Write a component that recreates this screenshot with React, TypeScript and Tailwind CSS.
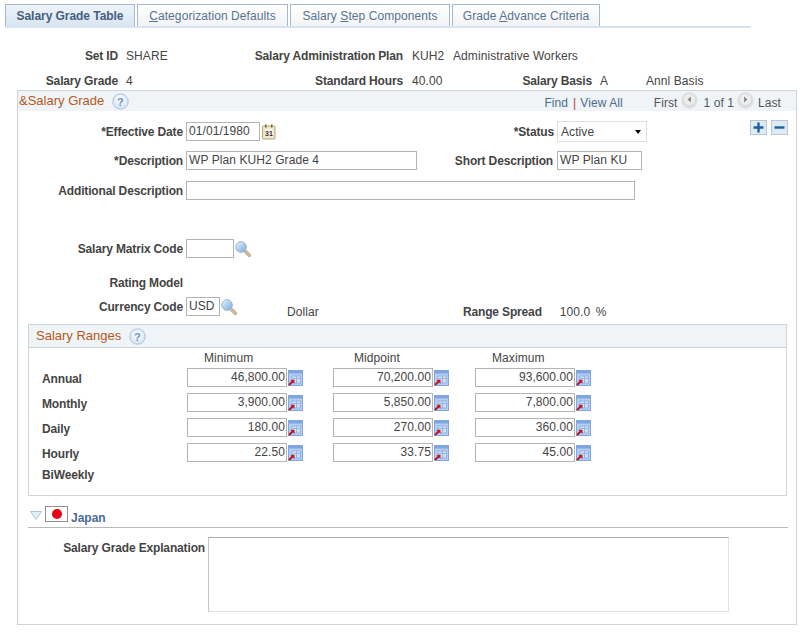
import React from "react";

const LABEL = "font-bold text-[#444] whitespace-nowrap tracking-[-0.15px]";

function Help() {
  return (
    <svg width="17" height="17" viewBox="0 0 17 17" className="shrink-0">
      <defs>
        <radialGradient id="hg" cx="50%" cy="40%" r="60%">
          <stop offset="0%" stopColor="#ffffff" />
          <stop offset="100%" stopColor="#d3e2f3" />
        </radialGradient>
      </defs>
      <circle cx="8.5" cy="8.5" r="7.7" fill="url(#hg)" stroke="#a9c2de" strokeWidth="1" />
      <text x="8.5" y="12.5" textAnchor="middle" fontSize="11" fontWeight="700" fontFamily="Liberation Sans" fill="#6f93bd">?</text>
    </svg>
  );
}

function Lookup({ id }: { id: string }) {
  return (
    <svg width="16" height="16" viewBox="0 0 16 16" className="shrink-0">
      <defs>
        <linearGradient id={id} x1="0" y1="0" x2="1" y2="1">
          <stop offset="0%" stopColor="#eef7fd" />
          <stop offset="100%" stopColor="#6fa8dc" />
        </linearGradient>
      </defs>
      <path d="M9.5 9.5 L14.4 14.4" stroke="#9aa7b5" strokeWidth="3.4" strokeLinecap="round" />
      <path d="M9.5 9.5 L14.4 14.4" stroke="#e2b483" strokeWidth="2.2" strokeLinecap="round" />
      <circle cx="6" cy="6" r="5.3" fill={`url(#${id})`} stroke="#93b6d6" strokeWidth="1" />
    </svg>
  );
}

function Calendar() {
  return (
    <svg width="14" height="16" viewBox="0 0 14 16" className="shrink-0">
      <rect x="0.5" y="2" width="12.5" height="13" rx="1" fill="#efe6c8" stroke="#b9a878" />
      <rect x="3" y="0.5" width="1.5" height="3" fill="#6b5f3c" />
      <rect x="9" y="0.5" width="1.5" height="3" fill="#6b5f3c" />
      <rect x="3" y="5" width="8" height="7.5" fill="#f8f4e4" />
      <text x="7" y="11.5" textAnchor="middle" fontSize="7" fontWeight="700" fontFamily="Liberation Sans" fill="#333">31</text>
    </svg>
  );
}

function Calc() {
  return (
    <svg width="15" height="16" viewBox="0 0 15 16" className="shrink-0">
      <rect x="0.5" y="0.5" width="14" height="15" fill="#b4cdf0" stroke="#7fa6e2" />
      <rect x="0.5" y="0.5" width="14" height="3" fill="#7fa6e2" />
      <rect x="4" y="6" width="8.5" height="7" fill="#cfe0f6" stroke="#93b4e4" />
      <path d="M5 8.5h7M8.5 6v7" stroke="#93b4e4" strokeWidth="1" />
      <path d="M1 15 L5 11" stroke="#c4121a" strokeWidth="2" />
      <path d="M2.5 9.8 H6.5 V13.8 Z" fill="#c4121a" />
    </svg>
  );
}

function Nav({ dir }: { dir: "l" | "r" }) {
  return (
    <svg width="17" height="17" viewBox="0 0 17 17" className="shrink-0">
      <circle cx="8.5" cy="8.5" r="8" fill="#dcdcdc" stroke="#e8e8e8" />
      <circle cx="8.5" cy="7.5" r="5.5" fill="#eeeeee" />
      <path d={dir === "l" ? "M10 4.5 V10.5 L6.5 7.5 Z" : "M7 4.5 V10.5 L10.5 7.5 Z"} fill="#8c8c8c" />
    </svg>
  );
}

function Box({ w, value, right }: { w: string; value?: string; right?: boolean }) {
  return (
    <div className={`${w} h-[19px] shrink-0 border border-[#b4b4b4] bg-white text-[#444] leading-[17px] overflow-hidden whitespace-nowrap ${right ? "text-right pr-[1px]" : "pl-[2px]"}`}>
      {value}
    </div>
  );
}

function Tab({ active, w, children }: { active?: boolean; w: string; children: React.ReactNode }) {
  return (
    <div className={`${w} h-[22px] flex items-center justify-center border border-b-0 border-[#a8b8cb] whitespace-nowrap ${active ? "bg-gradient-to-b from-[#eef3f9] to-[#d9e5f2] font-bold text-[#46607f] tracking-[-0.05px]" : "bg-gradient-to-b from-white to-[#f1f3f6] text-[#5a7290]"}`}>
      {children}
    </div>
  );
}

function RangeCell({ value }: { value: string }) {
  return (
    <div className="flex items-center gap-[1px]">
      <Box w="w-[100px]" value={value} right />
      <Calc />
    </div>
  );
}

const RANGES = [
  { label: "Annual", min: "46,800.00", mid: "70,200.00", max: "93,600.00" },
  { label: "Monthly", min: "3,900.00", mid: "5,850.00", max: "7,800.00" },
  { label: "Daily", min: "180.00", mid: "270.00", max: "360.00" },
  { label: "Hourly", min: "22.50", mid: "33.75", max: "45.00" },
];

const RANGE_COLS = "grid grid-cols-[158px_146px_142px_120px]";

export default function App() {
  return (
    <div className="w-[807px] h-[634px] bg-white overflow-hidden text-[12px] leading-[14px] text-[#444] tracking-[0.08px]" style={{ fontFamily: '"Liberation Sans", Arial, sans-serif' }}>
      {/* Tabs */}
      <div className="pt-[4px] pl-[5px]">
        <div className="w-[746px] border-b-2 border-[#d7e3f0] flex h-[24px]">
          <Tab active w="w-[130px] mr-[2px]">Salary Grade Table</Tab>
          <Tab w="w-[151px] mr-[2px]"><span><u>C</u>ategorization Defaults</span></Tab>
          <Tab w="w-[160px] mr-[2px]"><span>Salary <u>S</u>tep Components</span></Tab>
          <Tab w="w-[148px]"><span>Grade <u>A</u>dvance Criteria</span></Tab>
        </div>
      </div>

      {/* Header fields */}
      <div className="mt-[21px] flex h-[14px] items-center">
        <div className={`${LABEL} w-[118px] text-right`}>Set ID</div>
        <div className="ml-[8px] w-[277px]">
          <div className="flex justify-between">
            <span>SHARE</span>
            <span className={LABEL}>Salary Administration Plan</span>
          </div>
        </div>
        <span className="ml-[9px] w-[41px]">KUH2</span>
        <span>Administrative Workers</span>
      </div>
      <div className="mt-[11px] flex h-[14px] items-center">
        <div className={`${LABEL} w-[118px] text-right`}>Salary Grade</div>
        <div className="ml-[8px] w-[277px] flex justify-between">
          <span>4</span>
          <span className={LABEL}>Standard Hours</span>
        </div>
        <span className="ml-[9px] w-[110px]">40.00</span>
        <span className={`${LABEL} w-[70px] text-right`}>Salary Basis</span>
        <span className="ml-[8px] w-[46px]">A</span>
        <span>Annl Basis</span>
      </div>

      {/* Main panel */}
      <div className="ml-[17px] mt-[2px] w-[780px] h-[535px] border border-[#cfd3da]">
        <div className="h-[20px] bg-[#f0f4f6] flex items-center">
          <span className="ml-[1px] text-[#b5581d] text-[13px] tracking-normal">&amp;Salary Grade</span>
          <span className="ml-[8px]"><Help /></span>
          <div className="ml-auto mr-[15px] h-[20px] flex items-start text-[#4d6a93]">
            <span className="mt-[5px]">Find</span>
            <span className="mt-[5px] ml-[5px] mr-[4px] text-[#c0392b]">|</span>
            <span className="mt-[5px]">View All</span>
            <span className="mt-[5px] ml-[31px] text-[#555]">First</span>
            <span className="ml-[4px] mt-[1px]"><Nav dir="l" /></span>
            <span className="mt-[5px] ml-[5px] text-[#4d5a73]">1 of 1</span>
            <span className="ml-[3px] mt-[1px]"><Nav dir="r" /></span>
            <span className="mt-[5px] ml-[4px] text-[#555]">Last</span>
          </div>
        </div>

        <div className="mt-[10px] h-[21px] flex items-center">
          <div className={`${LABEL} w-[165px] text-right`}>*Effective Date</div>
          <div className="ml-[3px]"><Box w="w-[74px]" value="01/01/1980" /></div>
          <div className="ml-[2px]"><Calendar /></div>
          <div className={`${LABEL} w-[278px] text-right`}>*Status</div>
          <div className="ml-[3px] w-[90px] h-[21px] border border-[#dcdfe4] pl-[3px] flex items-center justify-between pr-[5px]">
            <span>Active</span>
            <span className="w-0 h-0 border-x-[3.5px] border-x-transparent border-t-[4px] border-t-black" />
          </div>
          <div className="ml-[103px] self-start -mt-[1px] flex gap-[4px]">
            <div className="w-[17px] h-[15px] bg-[#dfeaf3] border border-[#b6c8d6] flex items-center justify-center">
              <svg width="11" height="11" viewBox="0 0 11 11"><path d="M0.5 5.5h10M5.5 0.5v10" stroke="#1f5f9e" strokeWidth="2.4" /></svg>
            </div>
            <div className="w-[17px] h-[15px] bg-[#dfeaf3] border border-[#b6c8d6] flex items-center justify-center">
              <svg width="11" height="11" viewBox="0 0 11 11"><path d="M0.5 5.5h10" stroke="#1f5f9e" strokeWidth="2.4" /></svg>
            </div>
          </div>
        </div>

        <div className="mt-[9px] h-[19px] flex items-center">
          <div className={`${LABEL} w-[165px] text-right`}>*Description</div>
          <div className="ml-[3px]"><Box w="w-[231px]" value="WP Plan KUH2 Grade 4" /></div>
          <div className={`${LABEL} w-[136px] text-right`}>Short Description</div>
          <div className="ml-[4px]"><Box w="w-[85px]" value="WP Plan KU" /></div>
        </div>

        <div className="mt-[11px] h-[19px] flex items-center">
          <div className={`${LABEL} w-[165px] text-right`}>Additional Description</div>
          <div className="ml-[3px]"><Box w="w-[449px]" /></div>
        </div>

        <div className="mt-[39px] h-[19px] flex items-center">
          <div className={`${LABEL} w-[165px] text-right`}>Salary Matrix Code</div>
          <div className="ml-[3px]"><Box w="w-[48px]" /></div>
          <div className="ml-[1px]"><Lookup id="lk1" /></div>
        </div>

        <div className={`${LABEL} mt-[18px] h-[14px] w-[165px] text-right`}>Rating Model</div>

        <div className="mt-[7px] h-[19px] flex">
          <div className={`${LABEL} w-[165px] text-right self-center`}>Currency Code</div>
          <div className="ml-[3px]"><Box w="w-[34px]" value="USD" /></div>
          <div className="ml-[1px] self-center"><Lookup id="lk2" /></div>
          <span className="ml-[50px] mt-[8px]">Dollar</span>
          <span className={`${LABEL} ml-[143px] mt-[8px] w-[80px] text-right`}>Range Spread</span>
          <span className="ml-[18px] mt-[8px] w-[36px]">100.0</span>
          <span className="mt-[8px]">%</span>
        </div>

        {/* Salary Ranges */}
        <div className="ml-[10px] mt-[8px] w-[759px] h-[172px] border border-[#cfd3da]">
          <div className="h-[22px] bg-[#f0f4f6] border-b border-[#cfd3da] flex items-center box-content">
            <span className="ml-[7px] text-[#b5581d] text-[13px] tracking-normal">Salary Ranges</span>
            <span className="ml-[8px]"><Help /></span>
          </div>
          <div className={`${RANGE_COLS} mt-[3px] h-[14px]`}>
            <span />
            <span className="pl-[17px]">Minimum</span>
            <span className="pl-[21px]">Midpoint</span>
            <span className="pl-[17px]">Maximum</span>
          </div>
          <div className="mt-[3px] flex flex-col gap-[6px]">
            {RANGES.map((r) => (
              <div key={r.label} className={`${RANGE_COLS} h-[19px] items-center`}>
                <span className={`${LABEL} pl-[13px] mt-[3px]`}>{r.label}</span>
                <RangeCell value={r.min} />
                <RangeCell value={r.mid} />
                <RangeCell value={r.max} />
              </div>
            ))}
          </div>
          <div className={`${LABEL} pl-[13px] mt-[6px]`}>BiWeekly</div>
        </div>

        {/* Japan */}
        <div className="ml-[10px] mt-[10px] w-[760px] h-[22px] border-b border-[#b8b8b8] flex items-start">
          <svg width="12" height="9" viewBox="0 0 12 9" className="ml-[2px] mt-[5px] shrink-0">
            <path d="M0.5 0.5 H11.5 L6 8.5 Z" fill="#e3eef5" stroke="#a9c6da" />
          </svg>
          <div className="ml-[3px] w-[23px] h-[16px] border border-[#8f8f8f] flex items-center justify-center">
            <span className="w-[10px] h-[10px] rounded-full bg-[#e60012]" />
          </div>
          <span className="ml-[3px] mt-[5px] font-bold text-[#4a6a9c] tracking-normal">Japan</span>
        </div>

        <div className="mt-[9px] flex">
          <div className={`${LABEL} w-[187px] text-right mt-[4px]`}>Salary Grade Explanation</div>
          <div className="ml-[3px] w-[521px] h-[75px] border border-[#e0e2ea] border-t-[#aaaaaa] border-l-[#c4c4c4]" />
        </div>
      </div>
    </div>
  );
}
